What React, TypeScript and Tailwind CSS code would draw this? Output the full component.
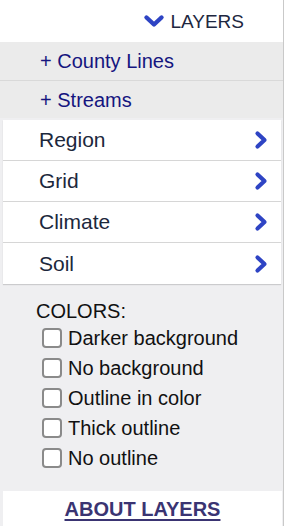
import { useState } from 'react';

const menuItems = ['Region', 'Grid', 'Climate', 'Soil'];
const colorOptions = ['Darker background', 'No background', 'Outline in color', 'Thick outline', 'No outline'];

function ChevronRight() {
  return (
    <svg width="14" height="20" viewBox="0 0 14 20" fill="none">
      <path d="M3.5 3.5 L10.5 10 L3.5 16.5" stroke="#2e44c4" strokeWidth="4.2" strokeLinecap="round" strokeLinejoin="round" />
    </svg>
  );
}

function ChevronDown() {
  return (
    <svg width="22" height="14" viewBox="0 0 22 14" fill="none">
      <path d="M3.5 3.5 L11 10.5 L18.5 3.5" stroke="#2e44c4" strokeWidth="4.4" strokeLinecap="round" strokeLinejoin="round" />
    </svg>
  );
}

export default function App() {
  const [checked, setChecked] = useState<Record<string, boolean>>({});

  return (
    <div className="w-[287px] h-[526px] bg-white font-['Liberation_Sans',Arial,sans-serif] overflow-hidden">
      <div className="w-[284px] h-full flex flex-col bg-[#efeff1] border-r border-[#c9c9c9]">
        {/* Header */}
        <div className="h-[42px] shrink-0 bg-white flex items-center justify-end pr-[39px] gap-[5px]">
          <ChevronDown />
          <span className="text-[19px] text-[#1e2740] leading-none">LAYERS</span>
        </div>

        {/* Overlay toggles */}
        <div className="h-[39px] shrink-0 bg-[#ebebeb] border-b border-[#d9d9d9] flex items-center pl-[40px] text-[20px] text-[#15157f]">
          + County Lines
        </div>
        <div className="h-[37px] shrink-0 bg-[#ebebeb] flex items-center pl-[40px] text-[20px] text-[#15157f]">
          + Streams
        </div>

        {/* Layer menu */}
        <div className="shrink-0 pt-[2px] pl-[3px] pr-[2px]">
          <div className="bg-white shadow-[0_1px_1px_rgba(0,0,0,0.15)]">
            {menuItems.map((item, i) => (
              <div
                key={item}
                className={`h-[41px] flex items-center justify-between pl-[36px] pr-[13px] text-[21px] text-[#1c283c] ${
                  i < menuItems.length - 1 ? 'border-b border-[#d6d6d6]' : ''
                }`}
              >
                <span>{item}</span>
                <ChevronRight />
              </div>
            ))}
          </div>
        </div>

        {/* Colors */}
        <div className="flex-1 flex flex-col pt-[15px]">
          <div className="h-[24px] flex items-center pl-[36px] text-[20px] text-[#111]">COLORS:</div>
          {colorOptions.map((opt) => (
            <label key={opt} className="h-[30px] flex items-center pl-[42px] gap-[6px] text-[20px] text-[#111] cursor-pointer">
              <span
                className={`block shrink-0 w-[20px] h-[20px] rounded-[4px] border-[2.5px] border-[#8a8a8a] ${
                  checked[opt] ? 'bg-[#2e44c4]' : 'bg-white'
                }`}
                onClick={() => setChecked((c) => ({ ...c, [opt]: !c[opt] }))}
              />
              <span>{opt}</span>
            </label>
          ))}
        </div>

        {/* About */}
        <div className="h-[35px] shrink-0 ml-[3px] mr-[1px] bg-white flex items-center justify-center">
          <a href="#" className="text-[20px] font-bold text-[#3a3472] underline underline-offset-[3px] decoration-[2px]">
            ABOUT LAYERS
          </a>
        </div>
      </div>
    </div>
  );
}
